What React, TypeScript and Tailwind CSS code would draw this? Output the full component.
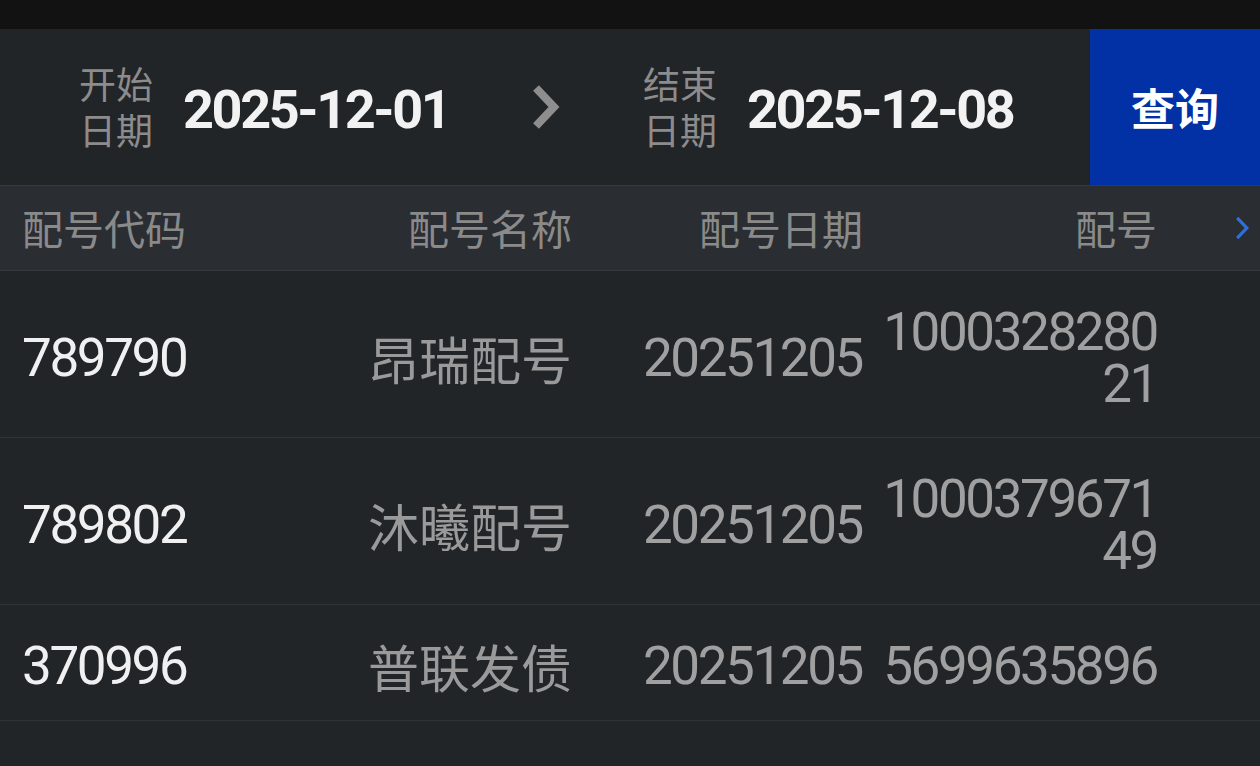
import React from "react";

const NUM = { fontFamily: 'Roboto, "Noto Sans", sans-serif' };
const CJK = { fontFamily: '"Noto Sans CJK SC", "Noto Sans", sans-serif' };

const rows = [
  { code: "789790", name: "昂瑞配号", date: "20251205", no: "100032828021", h: "" },
  { code: "789802", name: "沐曦配号", date: "20251205", no: "100037967149", h: "" },
  { code: "370996", name: "普联发债", date: "20251205", no: "5699635896", h: "pb-[28px]" },
];

function Chevron({ className, color, width }: { className: string; color: string; width: number }) {
  return (
    <svg className={className} viewBox="0 0 30 46" fill="none">
      <path d="M6 4 L24 23 L6 42" stroke={color} strokeWidth={width} strokeLinejoin="miter" />
    </svg>
  );
}

function DateBlock({ label1, label2, date }: { label1: string; label2: string; date: string }) {
  return (
    <div className="flex items-center shrink-0">
      <p className="text-[37px] leading-[46px] text-[#8c8c8c] w-[74px] whitespace-nowrap shrink-0 -mt-[2px]" style={CJK}>
        {label1}
        <br />
        {label2}
      </p>
      <div className="ml-[30px] mt-[5px] w-[270px] shrink-0 whitespace-nowrap text-[54px] leading-none font-bold text-[#f2f2f2] tracking-[-2.4px]" style={NUM}>
        {date}
      </div>
    </div>
  );
}

export default function App() {
  return (
    <div className="w-[1260px] h-[766px] bg-[#212528] flex flex-col overflow-hidden">
      <div className="h-[29px] shrink-0 bg-[#121212]" />
      <div className="h-[156px] shrink-0 flex bg-[#212528]">
        <div className="flex-1 flex items-center pl-[79px]">
          <DateBlock label1="开始" label2="日期" date="2025-12-01" />
          <Chevron className="ml-[77px] w-[30px] h-[46px] shrink-0" color="#8e8e8e" width={8} />
          <div className="ml-[83px]">
            <DateBlock label1="结束" label2="日期" date="2025-12-08" />
          </div>
        </div>
        <div className="w-[170px] shrink-0 bg-[#0231a6] flex items-center justify-center">
          <span className="text-[44px] font-bold text-white leading-none" style={CJK}>查询</span>
        </div>
      </div>
      <div className="h-[86px] shrink-0 bg-[#2a2e32] border-y border-[#363a3e] flex items-center pl-[22px] text-[41px] text-[#8a8a8a] whitespace-nowrap" style={CJK}>
        <div className="w-[250px] shrink-0">配号代码</div>
        <div className="w-[300px] shrink-0 text-right">配号名称</div>
        <div className="w-[291px] shrink-0 text-right">配号日期</div>
        <div className="w-[294px] shrink-0 text-right">配号</div>
        <div className="flex-1 flex justify-end pr-[10px]">
          <Chevron className="w-[16px] h-[28px]" color="#2f6fd8" width={6} />
        </div>
      </div>
      {rows.map((r) => (
        <div key={r.code} className={`flex shrink-0 items-center pl-[22px] pt-[35px] border-b border-[#2f3337] ${r.h || "pb-[27px]"}`}>
          <div className="w-[250px] shrink-0 text-[53px] leading-[52px] text-[#f0f0f0] tracking-[-2.4px]" style={NUM}>
            {r.code}
          </div>
          <div className="w-[300px] shrink-0 text-right text-[51px] leading-[52px] text-[#9a9a9a]" style={CJK}>
            {r.name}
          </div>
          <div className="w-[290px] shrink-0 text-right text-[53px] leading-[52px] text-[#a0a0a0] tracking-[-2.4px]" style={NUM}>
            {r.date}
          </div>
          <div className="w-[295px] shrink-0 text-right text-[53px] leading-[52px] text-[#a0a0a0] tracking-[-2.4px] break-all pl-[14px]" style={NUM}>
            {r.no}
          </div>
        </div>
      ))}
    </div>
  );
}
